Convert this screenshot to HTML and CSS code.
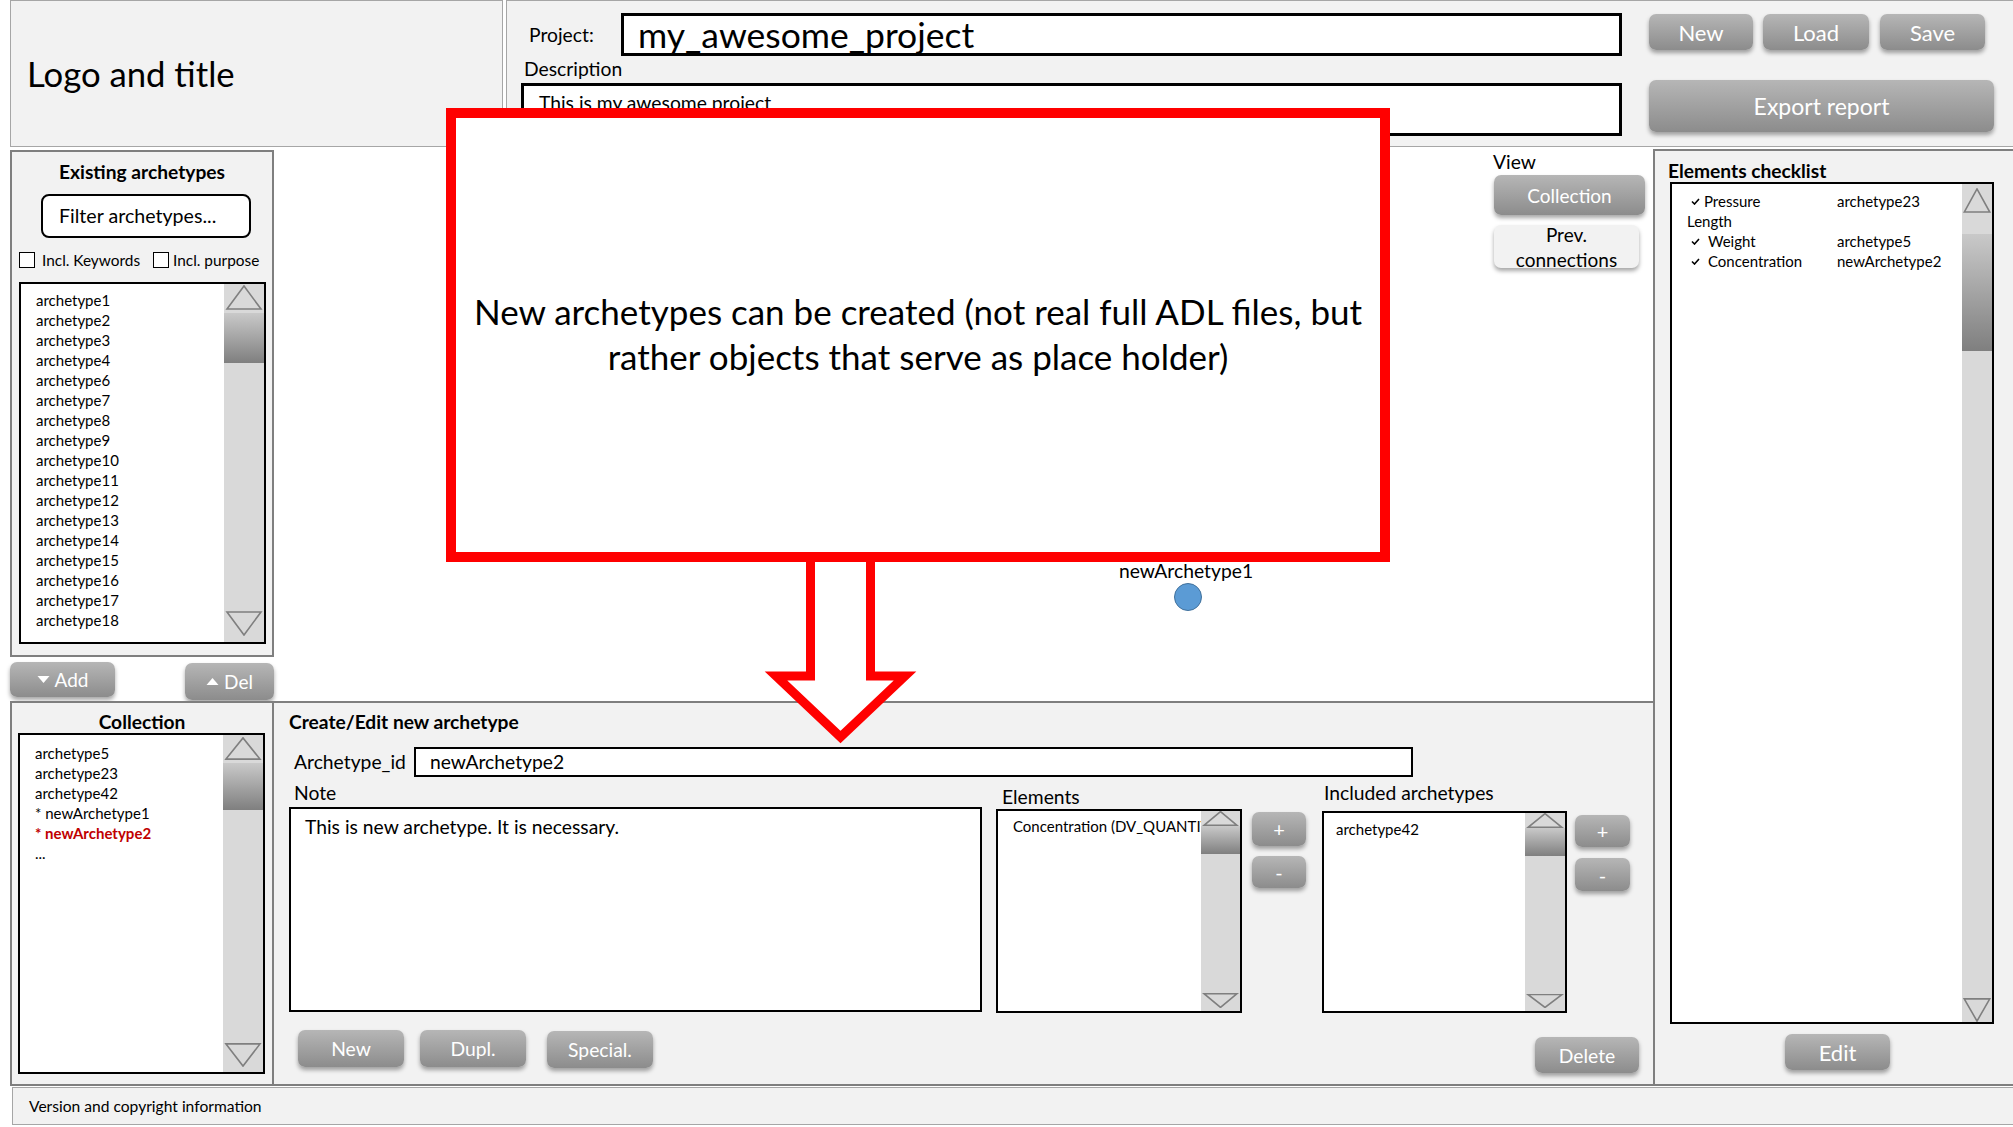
FILE: index.html
```html
<!DOCTYPE html>
<html lang="en">
<head>
<meta charset="utf-8">
<title>Archetype collection tool</title>
<link rel="stylesheet" href="styles.css">
</head>
<body>
<div class="page">
  <header class="top">
    <div class="logo-box">Logo and title</div>
    <div class="project-box">
      <div class="proj-form">
        <div class="proj-row">
          <span class="lbl proj-lbl">Project:</span>
          <div class="field proj-input">my_awesome_project</div>
        </div>
        <div class="lbl desc-lbl">Description</div>
        <div class="field desc-input">This is my awesome project</div>
      </div>
      <div class="proj-actions">
        <div class="btn-row">
          <div class="btn hbtn h-new">New</div>
          <div class="btn hbtn h-load">Load</div>
          <div class="btn hbtn h-save">Save</div>
        </div>
        <div class="btn export">Export report</div>
      </div>
    </div>
  </header>

  <div class="main">
    <div class="left-col">
      <section class="panel existing">
        <div class="ptitle">Existing archetypes</div>
        <div class="filter">Filter archetypes...</div>
        <div class="checks">
          <label class="chk chk1"><span class="box"></span>Incl. Keywords</label>
          <label class="chk chk2"><span class="box"></span>Incl. purpose</label>
        </div>
        <div class="list ex-list">
          <div class="items">
            <div>archetype1</div><div>archetype2</div><div>archetype3</div><div>archetype4</div>
            <div>archetype6</div><div>archetype7</div><div>archetype8</div><div>archetype9</div>
            <div>archetype10</div><div>archetype11</div><div>archetype12</div><div>archetype13</div>
            <div>archetype14</div><div>archetype15</div><div>archetype16</div><div>archetype17</div>
            <div>archetype18</div>
          </div>
          <div class="sb sb-a">
            <svg class="arr up" viewBox="0 0 40 26" preserveAspectRatio="none"><polygon points="3,25 20,1 37,25" vector-effect="non-scaling-stroke"/></svg>
            <div class="thumb"></div>
            <div class="track"></div>
            <svg class="arr down" viewBox="0 0 40 26" preserveAspectRatio="none"><polygon points="3,1 20,25 37,1" vector-effect="non-scaling-stroke"/></svg>
          </div>
        </div>
      </section>

      <div class="adddel">
        <div class="btn add"><svg class="tri" viewBox="0 0 12 7"><polygon points="0,0 12,0 6,7"/></svg>Add</div>
        <div class="btn del"><svg class="tri" viewBox="0 0 12 7"><polygon points="0,7 12,7 6,0"/></svg>Del</div>
      </div>

      <section class="panel collection">
        <div class="ptitle">Collection</div>
        <div class="list col-list">
          <div class="items">
            <div>archetype5</div>
            <div>archetype23</div>
            <div>archetype42</div>
            <div>* newArchetype1</div>
            <div class="sel">* newArchetype2</div>
            <div>...</div>
          </div>
          <div class="sb sb-c">
            <svg class="arr up" viewBox="0 0 40 26" preserveAspectRatio="none"><polygon points="3,25 20,1 37,25" vector-effect="non-scaling-stroke"/></svg>
            <div class="thumb"></div>
            <div class="track"></div>
            <svg class="arr down" viewBox="0 0 40 26" preserveAspectRatio="none"><polygon points="3,1 20,25 37,1" vector-effect="non-scaling-stroke"/></svg>
          </div>
        </div>
      </section>
    </div>

    <div class="center-col">
      <div class="canvas">
        <div class="view">
          <div class="view-lbl">View</div>
          <div class="btn vbtn-coll">Collection</div>
          <div class="vbtn-prev"><span>Prev.<br>connections</span></div>
        </div>
        <div class="node">
          <div class="node-lbl">newArchetype1</div>
          <div class="node-dot"></div>
        </div>
      </div>

      <section class="edit">
        <div class="edit-title">Create/Edit new archetype</div>
        <div class="id-row">
          <span class="lbl id-lbl">Archetype_id</span>
          <div class="id-input">newArchetype2</div>
        </div>
        <div class="fields">
          <div class="note-col">
            <div class="lbl note-lbl">Note</div>
            <div class="note">This is new archetype. It is necessary.</div>
          </div>
          <div class="el-col">
            <div class="lbl el-lbl">Elements</div>
            <div class="el-body">
              <div class="list el-list">
                <div class="items"><div>Concentration (DV_QUANTITY)</div></div>
                <div class="sb sb-e">
                  <svg class="arr up" viewBox="0 0 40 26" preserveAspectRatio="none"><polygon points="3,25 20,1 37,25" vector-effect="non-scaling-stroke"/></svg>
                  <div class="thumb"></div>
                  <div class="track"></div>
                  <svg class="arr down" viewBox="0 0 40 26" preserveAspectRatio="none"><polygon points="3,1 20,25 37,1" vector-effect="non-scaling-stroke"/></svg>
                </div>
              </div>
              <div class="pm pm1">
                <div class="btn plus">+</div>
                <div class="btn minus">-</div>
              </div>
            </div>
          </div>
          <div class="in-col">
            <div class="lbl in-lbl">Included archetypes</div>
            <div class="in-body">
              <div class="list in-list">
                <div class="items"><div>archetype42</div></div>
                <div class="sb sb-i">
                  <svg class="arr up" viewBox="0 0 40 26" preserveAspectRatio="none"><polygon points="3,25 20,1 37,25" vector-effect="non-scaling-stroke"/></svg>
                  <div class="thumb"></div>
                  <div class="track"></div>
                  <svg class="arr down" viewBox="0 0 40 26" preserveAspectRatio="none"><polygon points="3,1 20,25 37,1" vector-effect="non-scaling-stroke"/></svg>
                </div>
              </div>
              <div class="pm pm2">
                <div class="btn plus">+</div>
                <div class="btn minus">-</div>
              </div>
            </div>
          </div>
        </div>
        <div class="edit-btns">
          <div class="btn ebtn e-new">New</div>
          <div class="btn ebtn e-dupl">Dupl.</div>
          <div class="btn ebtn e-spec">Special.</div>
          <div class="btn ebtn e-del">Delete</div>
        </div>
      </section>
    </div>

    <section class="panel checklist">
      <div class="ptitle left">Elements checklist</div>
      <div class="list ck-list">
        <div class="items ck-items">
          <div class="ck-row"><span class="ck"><svg viewBox="0 0 9 7"><polyline points="1,3.5 3.5,6 8,1"/></svg></span><span class="ck-name">Pressure</span><span>archetype23</span></div>
          <div class="ck-row"><span class="ck-len">Length</span></div>
          <div class="ck-row"><span class="ck"><svg viewBox="0 0 9 7"><polyline points="1,3.5 3.5,6 8,1"/></svg></span><span class="ck-name ind">Weight</span><span>archetype5</span></div>
          <div class="ck-row"><span class="ck"><svg viewBox="0 0 9 7"><polyline points="1,3.5 3.5,6 8,1"/></svg></span><span class="ck-name ind">Concentration</span><span>newArchetype2</span></div>
        </div>
        <div class="sb sb-k">
          <svg class="arr up" viewBox="0 0 40 26" preserveAspectRatio="none"><polygon points="3,25 20,1 37,25" vector-effect="non-scaling-stroke"/></svg>
          <div class="thumb"></div>
          <div class="track"></div>
          <svg class="arr down" viewBox="0 0 40 26" preserveAspectRatio="none"><polygon points="3,1 20,25 37,1" vector-effect="non-scaling-stroke"/></svg>
        </div>
      </div>
      <div class="btn ck-edit">Edit</div>
    </section>
  </div>

  <footer class="footer">Version and copyright information</footer>

  <div class="callout"><p>New archetypes can be created (not real full ADL files, but<br>rather objects that serve as place holder)</p></div>
  <svg class="arrow" viewBox="0 0 160 195" width="160" height="195">
    <path d="M50.5 6 L50.5 120 L16 120 L80.5 181 L145 120 L110.5 120 L110.5 6"/>
  </svg>
</div>
</body>
</html>
```

FILE: styles.css
```css
* { box-sizing: border-box; }
html, body { margin: 0; padding: 0; }
body {
  width: 2013px;
  height: 1127px;
  overflow: hidden;
  background: #fff;
  color: #000;
  font-family: Lato, "Noto Sans", sans-serif;
}
.page { position: relative; width: 2013px; height: 1127px; }

/* ---------- header ---------- */
.top { display: flex; height: 147px; padding-left: 10px; gap: 3px; }
.logo-box {
  width: 493px; height: 147px;
  border: 1px solid #a6a6a6; background: #f2f2f2;
  display: flex; align-items: center;
  padding-left: 16px;
  font-size: 34.7px; line-height: 1.2;
}
.project-box {
  flex: 1; height: 147px;
  border: 1px solid #a6a6a6; border-right: 0;
  background: #f2f2f2;
  display: flex; padding-left: 14px;
}
.proj-form { width: 1101px; }
.lbl { font-size: 19.3px; line-height: 22px; }
.proj-row { display: flex; align-items: center; margin-top: 12px; height: 43px; }
.proj-lbl { width: 100px; padding-left: 8px; }
.field { background: #fff; border: 3px solid #000; }
.proj-input {
  width: 1001px; height: 43px;
  font-size: 35.5px; line-height: 37px; padding-left: 14px;
}
.desc-lbl { margin-top: 2px; padding-left: 3px; }
.desc-input {
  margin-top: 3px; height: 53px;
  font-size: 19.3px; line-height: 22px;
  padding: 6px 0 0 15px;
}
.proj-actions { margin-left: 27px; width: 345px; }
.btn-row { display: flex; margin-top: 13px; }

.btn {
  border-radius: 7px;
  background: linear-gradient(#b6b6b6, #8c8c8c);
  color: #fff;
  box-shadow: 0 3px 4px rgba(0, 0, 0, 0.35);
  display: flex; align-items: center; justify-content: center;
  font-size: 19px;
}
.hbtn { height: 36px; font-size: 22px; }
.h-new { width: 104px; }
.h-load { width: 106px; margin-left: 10px; }
.h-save { width: 105px; margin-left: 11px; }
.export { width: 345px; height: 52px; margin-top: 30px; font-size: 23px; }

/* ---------- main ---------- */
.main { display: flex; height: 939px; }
.left-col { margin-left: 10px; width: 264px; padding-top: 3px; display: flex; flex-direction: column; }
.panel { border: 2px solid #7f7f7f; background: #f2f2f2; }
.ptitle { font-weight: 700; font-size: 19.2px; line-height: 22px; text-align: center; }
.ptitle.left { text-align: left; }

.existing { height: 507px; padding-top: 9px; }
.filter {
  margin: 11px 0 0 29px; width: 210px; height: 44px;
  border: 2px solid #000; border-radius: 8px; background: #fff;
  font-size: 19.6px; line-height: 40px; padding-left: 16px;
}
.checks { display: flex; align-items: center; margin: 14px 0 0 7px; height: 16px; font-size: 15.4px; }
.chk { display: flex; align-items: center; }
.chk1 { width: 134px; }
.box { width: 16px; height: 16px; border: 1.5px solid #000; background: #fff; margin-right: 7px; }
.chk2 .box { margin-right: 4px; }

.list { display: flex; border: 2px solid #000; background: #fff; }
.items { flex: 1; min-width: 0; font-size: 15px; line-height: 20px; overflow: hidden; white-space: nowrap; }
.ex-list { margin: 14px 0 0 7px; width: 247px; height: 362px; }
.ex-list .items { padding: 6px 0 0 15px; }

.sb { width: 40px; flex: none; background: #d9d9d9; display: flex; flex-direction: column; }
.arr { display: block; width: 100%; flex: none; fill: none; stroke: #7f7f7f; stroke-width: 1.6; }
.thumb { flex: none; background: linear-gradient(#c9c9c9, #7f7f7f); }
.track { flex: 1; }

.sb-a { padding-top: 1px; }
.sb-a .up { height: 25px; }
.sb-a .thumb { margin-top: 3px; height: 50px; }
.sb-a .down { height: 25px; margin-bottom: 6px; }

.adddel { height: 44px; display: flex; justify-content: space-between; align-items: flex-start; }
.add { width: 105px; height: 35px; margin-top: 5px; }
.del { width: 89px; height: 37px; margin-top: 6px; }
.tri { width: 13px; height: 7px; fill: #fff; margin-right: 5px; }

.collection { height: 385px; padding-top: 8px; }
.col-list { margin-left: 6px; width: 247px; height: 341px; }
.col-list .items { padding: 8px 0 0 15px; }
.sel { color: #c00000; font-weight: 700; }
.sb-c { padding-top: 2px; }
.sb-c .up { height: 23px; }
.sb-c .thumb { margin-top: 3px; height: 47px; }
.sb-c .down { height: 24px; margin-bottom: 5px; }

/* ---------- centre ---------- */
.center-col { width: 1379px; display: flex; flex-direction: column; }
.canvas {
  position: relative; height: 554px;
  display: flex; justify-content: flex-end;
  padding: 4px 8px 0 0;
}
.view { width: 152px; display: flex; flex-direction: column; align-items: flex-start; }
.view-lbl { font-size: 19.3px; line-height: 22px; }
.vbtn-coll { margin: 2px 0 0 1px; width: 151px; height: 40px; }
.vbtn-prev {
  margin: 10px 0 0 1px; width: 145px; height: 43px;
  background: #f2f2f2; border-radius: 7px;
  box-shadow: 0 3px 4px rgba(0, 0, 0, 0.35);
  font-size: 19px; line-height: 25px; text-align: center;
}
.vbtn-prev span { display: block; margin-top: -3px; }

.node {
  position: absolute; left: 852px; top: 413px; width: 120px;
  display: flex; flex-direction: column; align-items: center;
}
.node-lbl { font-size: 19.3px; line-height: 22px; }
.node-dot {
  width: 28px; height: 28px; margin: 1px 0 0 4px;
  border-radius: 50%; background: #5b9bd5; border: 1.5px solid #41719c;
}

.edit {
  height: 385px;
  border-top: 2px solid #7f7f7f; border-bottom: 2px solid #7f7f7f;
  background: #f2f2f2;
  padding: 8px 0 0 15px;
  display: flex; flex-direction: column;
}
.edit-title { font-weight: 700; font-size: 19.2px; line-height: 22px; }
.id-row { display: flex; align-items: center; margin-top: 14px; height: 30px; }
.id-lbl { width: 125px; padding-left: 5px; }
.id-input {
  width: 999px; height: 30px;
  border: 2px solid #000; background: #fff;
  font-size: 19.3px; line-height: 26px; padding-left: 14px;
}
.fields { display: flex; align-items: flex-start; }
.note-col { width: 693px; }
.note-lbl { margin-top: 5px; padding-left: 5px; }
.note {
  margin-top: 3px; height: 205px;
  border: 2px solid #000; background: #fff;
  font-size: 19.3px; line-height: 22px;
  padding: 7px 0 0 14px;
}
.el-col { margin-left: 14px; }
.el-lbl { margin-top: 9px; padding-left: 6px; }
.el-body { display: flex; margin-top: 1px; }
.el-list { width: 246px; height: 204px; }
.el-list .items { padding: 5px 0 0 15px; }
.sb-e { width: 39px; }
.sb-e .up { height: 15px; }
.sb-e .thumb { height: 28px; }
.sb-e .down { height: 15px; margin-bottom: 3px; }

.pm { display: flex; flex-direction: column; }
.pm .btn { font-size: 20px; }
.pm1 { margin: 3px 0 0 10px; }
.pm1 .btn { width: 54px; }
.pm1 .plus { height: 34px; }
.pm1 .minus { height: 32px; margin-top: 10px; }

.in-col { margin-left: 16px; }
.in-lbl { margin-top: 5px; padding-left: 2px; }
.in-body { display: flex; margin-top: 7px; }
.in-list { width: 245px; height: 202px; }
.in-list .items { padding: 6px 0 0 12px; }
.sb-i .up { height: 15px; }
.sb-i .thumb { height: 28px; }
.sb-i .down { height: 14px; margin-bottom: 3px; }
.pm2 { margin: 4px 0 0 8px; }
.pm2 .btn { width: 55px; }
.pm2 .plus { height: 32px; }
.pm2 .minus { height: 33px; margin-top: 11px; }

.edit-btns { display: flex; align-items: flex-start; margin-top: 17px; }
.ebtn { height: 37px; width: 106px; font-size: 19.3px; }
.e-new { margin-left: 9px; }
.e-dupl { margin-left: 16px; }
.e-spec { margin-left: 21px; margin-top: 1px; }
.e-del { margin-left: auto; margin-right: 14px; margin-top: 7px; width: 104px; height: 36px; }

/* ---------- right panel ---------- */
.checklist {
  flex: 1; margin-top: 2px; height: 937px;
  border-width: 2px 0 2px 2px;
  padding: 9px 0 0 13px;
}
.ck-list { margin-left: 2px; width: 324px; height: 842px; }
.ck-items { padding-top: 7px; }
.ck-row { display: flex; align-items: center; height: 20px; }
.ck { width: 32px; padding-left: 19px; display: flex; align-items: center; }
.ck svg { width: 9px; height: 7px; fill: none; stroke: #000; stroke-width: 1.6; }
.ck-name { width: 133px; }
.ck-name.ind { padding-left: 4px; }
.ck-len { padding-left: 15px; }
.sb-k { width: 30px; padding-top: 4px; }
.sb-k .up { height: 25px; }
.sb-k .thumb { margin-top: 21px; height: 117px; }
.sb-k .down { height: 24px; }
.ck-edit { margin: 10px 0 0 117px; width: 105px; height: 36px; font-size: 22px; }

/* ---------- footer ---------- */
.footer {
  margin: 1px 0 0 12px; height: 38px;
  border: 1px solid #a6a6a6; border-right: 0;
  background: #f2f2f2;
  font-size: 15.6px; padding-left: 16px;
  display: flex; align-items: center;
}

/* ---------- annotation overlay ---------- */
.callout {
  position: absolute; left: 446px; top: 108px;
  width: 944px; height: 454px;
  border: 10px solid #ff0000; background: #fff;
  display: flex; align-items: center; justify-content: center;
  text-align: center; padding-bottom: 3px;
  font-size: 35px; line-height: 45px;
}
.callout p { margin: 0; }
.arrow { position: absolute; left: 760px; top: 556px; overflow: visible; }
.arrow path { fill: #fff; stroke: #ff0000; stroke-width: 9; stroke-linejoin: miter; stroke-miterlimit: 10; }
```
